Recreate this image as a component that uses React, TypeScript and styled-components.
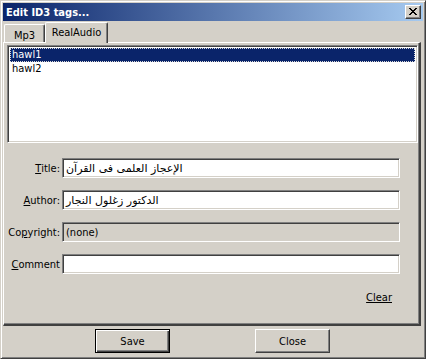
import React from "react";
import styled, { createGlobalStyle } from "styled-components";

const Global = createGlobalStyle`
  html, body { margin: 0; padding: 0; background: #D4D0C8; }
  body { font-family: Tahoma, "DejaVu Sans Condensed", "Liberation Sans", sans-serif; font-size: 11px; color: #000; }
  * { box-sizing: border-box; }
`;

const Window = styled.div`
  width: 426px;
  height: 359px;
  background: #D4D0C8;
  border: 1px solid;
  border-color: #D4D0C8 #404040 #404040 #D4D0C8;
  box-shadow: inset 1px 1px #ffffff, inset -1px -1px #808080;
  padding: 2px;
  display: flex;
  flex-direction: column;
`;

const TitleBar = styled.div`
  height: 18px;
  background: linear-gradient(to right, #0A246A, #A6CAF0);
  display: flex;
  align-items: center;
  justify-content: space-between;
  padding: 0 2px 0 3px;
`;

const TitleText = styled.span`
  color: #fff;
  font-weight: bold;
  font-size: 11px;
`;

const CloseBox = styled.div`
  width: 16px;
  height: 14px;
  background: #D4D0C8;
  border: 1px solid;
  border-color: #ffffff #404040 #404040 #ffffff;
  box-shadow: inset -1px -1px #808080;
  display: flex;
  align-items: center;
  justify-content: center;
  padding-bottom: 1px;
`;

const TabRow = styled.div`
  margin-top: 1px;
  height: 20px;
  display: flex;
  align-items: flex-end;
  padding-left: 1px;
`;

const Tab = styled.div<{ $active?: boolean }>`
  position: relative;
  z-index: ${(p) => (p.$active ? 2 : 1)};
  background: #D4D0C8;
  height: ${(p) => (p.$active ? "21px" : "18px")};
  width: ${(p) => (p.$active ? "63px" : "41px")};
  margin-bottom: ${(p) => (p.$active ? "-1px" : "0")};
  border-top: 1px solid #ffffff;
  border-left: 1px solid #ffffff;
  border-right: 1px solid #404040;
  box-shadow: inset -1px 0 #808080;
  border-radius: 2px 2px 0 0;
  display: flex;
  justify-content: center;
  padding-top: ${(p) => (p.$active ? "3px" : "4px")};
`;

const Panel = styled.div`
  width: 418px;
  height: 284px;
  border: 1px solid;
  border-width: 1px 2px 2px 1px;
  border-color: #ffffff #404040 #404040 #ffffff;
  box-shadow: inset -1px -1px #808080;
  display: flex;
  flex-direction: column;
  padding: 2px 0 0 3px;
`;

const ListBox = styled.div`
  width: 411px;
  height: 98px;
  background: #fff;
  border: 1px solid;
  border-color: #808080 #ffffff #ffffff #808080;
  box-shadow: inset 1px 1px #404040, inset -1px -1px #D4D0C8;
  padding: 2px 2px;
  display: flex;
  flex-direction: column;
`;

const ListItem = styled.div<{ $selected?: boolean }>`
  height: 14px;
  line-height: 12px;
  padding-left: 1px;
  color: ${(p) => (p.$selected ? "#fff" : "#000")};
  background: ${(p) => (p.$selected ? "#0A246A" : "transparent")};
  border: 1px ${(p) => (p.$selected ? "dotted #d8d8d8" : "solid transparent")};
`;

const Form = styled.div`
  margin-top: 15px;
  margin-left: -3px;
  display: grid;
  grid-template-columns: 56px 338px;
  column-gap: 2px;
  row-gap: 12px;
`;

const Label = styled.label`
  height: 20px;
  display: flex;
  align-items: center;
  justify-content: flex-end;
  white-space: nowrap;
`;

const Key = styled.span`
  text-decoration: underline;
`;

const Field = styled.div<{ $disabled?: boolean }>`
  height: 20px;
  background: ${(p) => (p.$disabled ? "#D4D0C8" : "#ffffff")};
  border: 1px solid;
  border-color: #808080 #ffffff #ffffff #808080;
  box-shadow: inset 1px 1px #404040, inset -1px -1px #D4D0C8;
  display: flex;
  align-items: center;
  padding: 0 3px;
  white-space: nowrap;
  overflow: hidden;
`;

const Arabic = styled.span`
  direction: rtl;
  unicode-bidi: isolate;
  font-family: "DejaVu Sans", sans-serif;
  font-size: 11px;
`;

const ClearRow = styled.div`
  margin-top: 17px;
  display: flex;
  justify-content: flex-end;
  padding-right: 27px;
`;

const ClearLink = styled.span`
  text-decoration: underline;
  line-height: 13px;
`;

const ButtonRow = styled.div`
  margin-top: 3px;
  display: flex;
  padding-left: 92px;
  gap: 85px;
`;

const Button = styled.div<{ $default?: boolean }>`
  width: 75px;
  height: 24px;
  background: #D4D0C8;
  display: flex;
  align-items: center;
  justify-content: center;
  border: 1px solid;
  border-color: ${(p) => (p.$default ? "#000" : "#ffffff #404040 #404040 #ffffff")};
  box-shadow: ${(p) =>
    p.$default
      ? "inset 1px 1px #ffffff, inset -1px -1px #404040, inset -2px -2px #808080"
      : "inset -1px -1px #808080"};
`;

export default function App() {
  return (
    <>
      <Global />
      <Window>
        <TitleBar>
          <TitleText>Edit ID3 tags...</TitleText>
          <CloseBox>
            <svg width="8" height="7" viewBox="0 0 8 7" shapeRendering="crispEdges">
              <path d="M0 0h2v1h-2zM6 0h2v1h-2zM1 1h2v1h-2zM5 1h2v1h-2zM2 2h4v1h-4zM3 3h2v1h-2zM2 4h4v1h-4zM1 5h2v1h-2zM5 5h2v1h-2zM0 6h2v1h-2zM6 6h2v1h-2z" fill="#000" />
            </svg>
          </CloseBox>
        </TitleBar>
        <TabRow>
          <Tab>Mp3</Tab>
          <Tab $active>RealAudio</Tab>
        </TabRow>
        <Panel>
          <ListBox>
            <ListItem $selected>hawl1</ListItem>
            <ListItem>hawl2</ListItem>
          </ListBox>
          <Form>
            <Label><Key>T</Key>itle:</Label>
            <Field><Arabic>الإعجاز العلمى فى القرآن</Arabic></Field>
            <Label><Key>A</Key>uthor:</Label>
            <Field><Arabic>الدكتور زغلول النجار</Arabic></Field>
            <Label>Co<Key>p</Key>yright:</Label>
            <Field $disabled>(none)</Field>
            <Label><Key>C</Key>omment</Label>
            <Field />
          </Form>
          <ClearRow>
            <ClearLink>Clear</ClearLink>
          </ClearRow>
        </Panel>
        <ButtonRow>
          <Button $default>Save</Button>
          <Button>Close</Button>
        </ButtonRow>
      </Window>
    </>
  );
}
